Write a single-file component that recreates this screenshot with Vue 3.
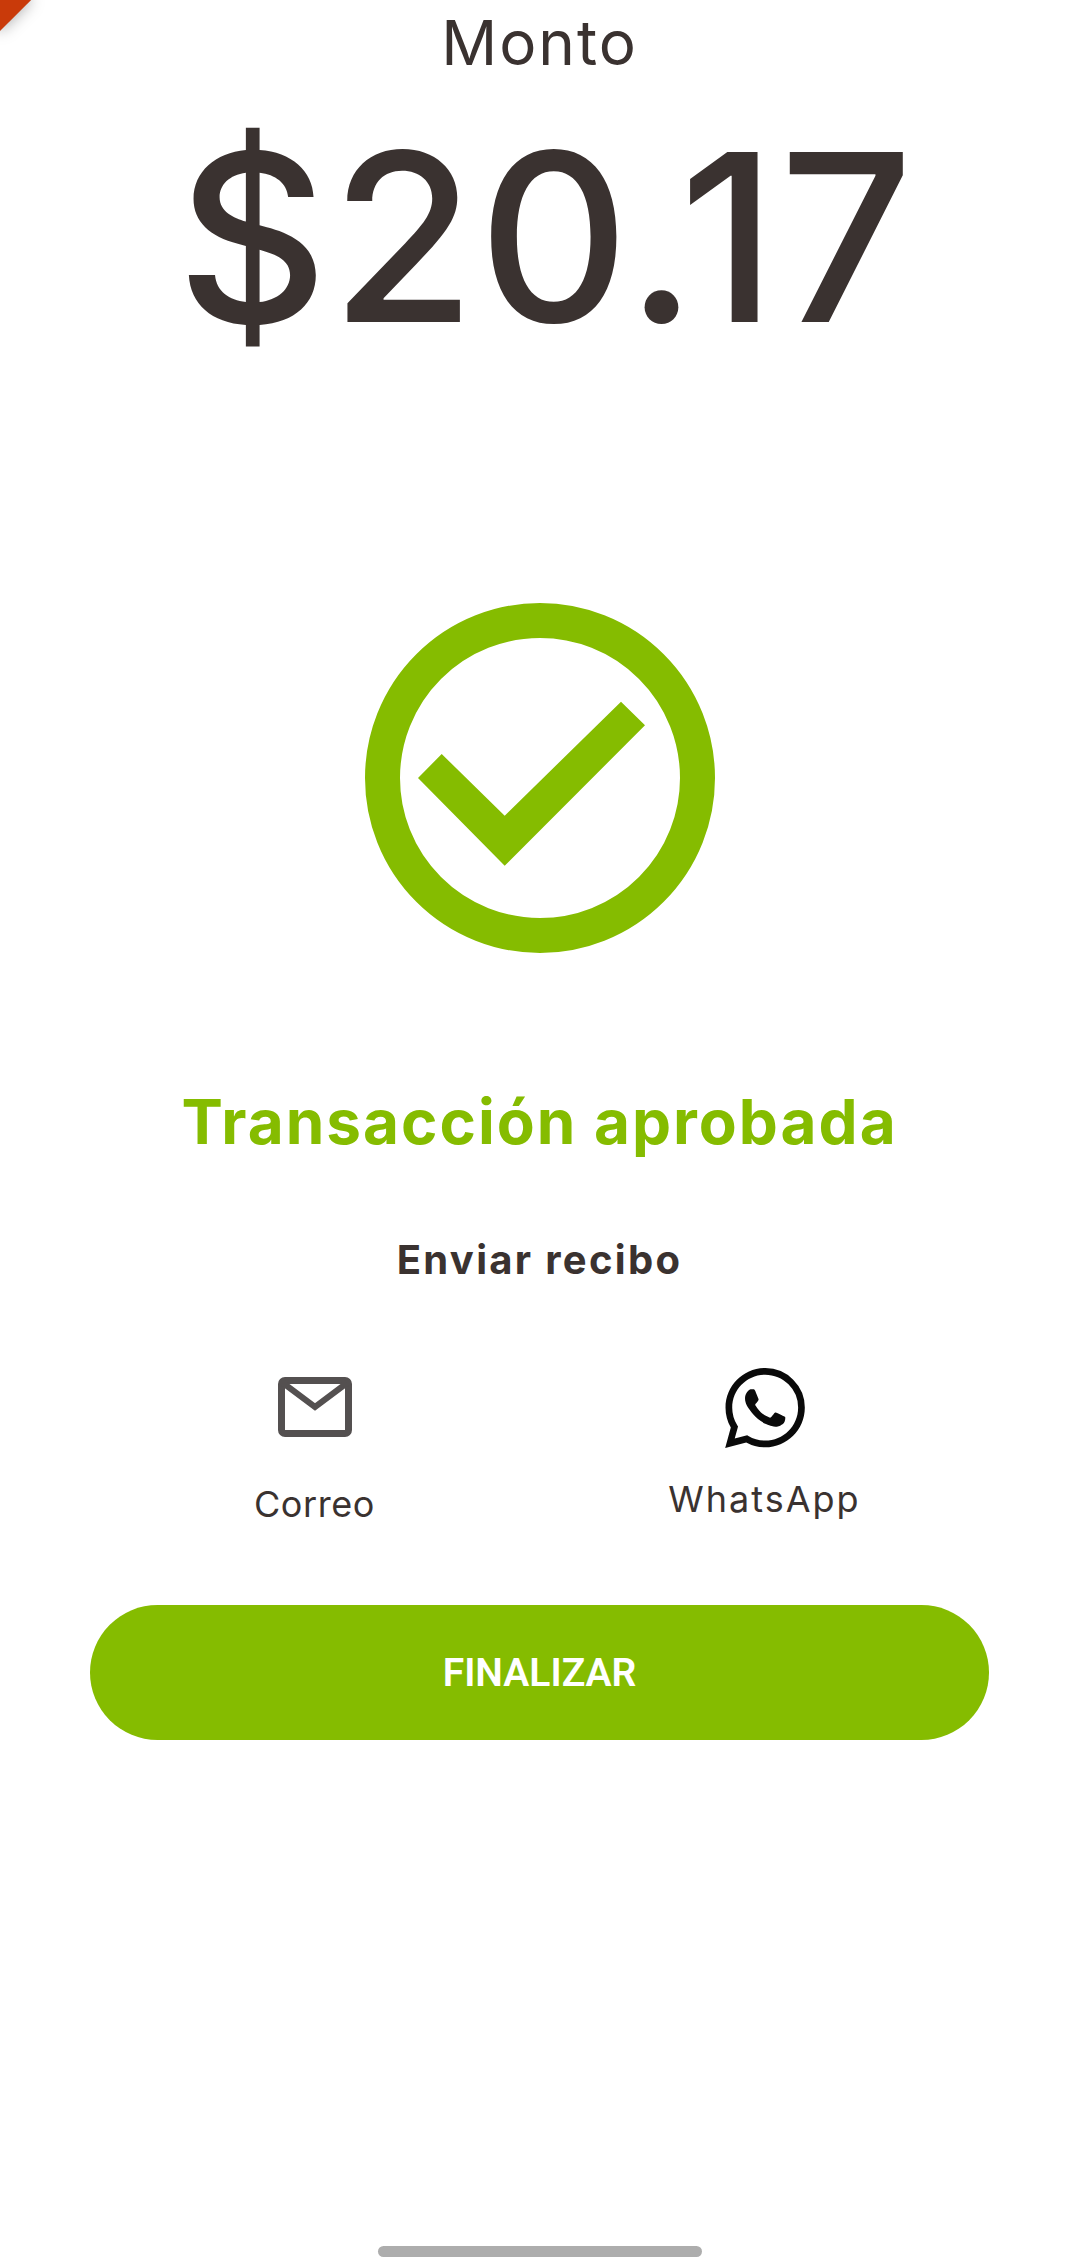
<template>
  <div class="screen">
    <div class="corner"></div>

    <div class="amount-label">Monto</div>
    <div class="amount">$20.17</div>

    <svg class="status-icon" viewBox="0 0 350 350" xmlns="http://www.w3.org/2000/svg">
      <circle cx="175" cy="175" r="157.5" fill="none" stroke="#85bc00" stroke-width="35" />
      <polygon points="53,175 76.7,151 139.7,212.7 256,98.7 280,122.3 139.7,262.7" fill="#85bc00" />
    </svg>

    <div class="status-text">Transacción aprobada</div>
    <div class="send-title">Enviar recibo</div>

    <div class="send-options">
      <div class="option">
        <svg class="mail-icon" viewBox="0 0 74 60" xmlns="http://www.w3.org/2000/svg">
          <rect x="3.5" y="3.5" width="67" height="53" rx="3.5" fill="none" stroke="#545050" stroke-width="7" />
          <polyline points="5,6 37,30 69,6" fill="none" stroke="#545050" stroke-width="6" />
        </svg>
        <span class="option-label">Correo</span>
      </div>
      <div class="option option-wa">
        <svg class="wa-icon" viewBox="0 0 24 24" xmlns="http://www.w3.org/2000/svg">
          <path fill="#0a0a0a" d="M17.472 14.382c-.297-.149-1.758-.867-2.03-.967-.273-.099-.471-.148-.67.15-.197.297-.767.966-.94 1.164-.173.199-.347.223-.644.075-.297-.15-1.255-.463-2.39-1.475-.883-.788-1.48-1.761-1.653-2.059-.173-.297-.018-.458.13-.606.134-.133.298-.347.446-.52.149-.174.198-.298.298-.497.099-.198.05-.371-.025-.52-.075-.149-.669-1.612-.916-2.207-.242-.579-.487-.5-.669-.51-.173-.008-.371-.01-.57-.01-.198 0-.52.074-.792.372-.272.297-1.04 1.016-1.04 2.479 0 1.462 1.065 2.875 1.213 3.074.149.198 2.096 3.2 5.077 4.487.709.306 1.262.489 1.694.625.712.227 1.36.195 1.871.118.571-.085 1.758-.719 2.006-1.413.248-.694.248-1.289.173-1.413-.074-.124-.272-.198-.57-.347m-5.421 7.403h-.004a9.87 9.87 0 01-5.031-1.378l-.361-.214-3.741.982.998-3.648-.235-.374a9.86 9.86 0 01-1.51-5.26c.001-5.45 4.436-9.884 9.888-9.884 2.64 0 5.122 1.03 6.988 2.898a9.825 9.825 0 012.893 6.994c-.003 5.45-4.437 9.884-9.885 9.884m8.413-18.297A11.815 11.815 0 0012.05 0C5.495 0 .16 5.335.157 11.892c0 2.096.547 4.142 1.588 5.945L.057 24l6.305-1.654a11.882 11.882 0 005.683 1.448h.005c6.554 0 11.89-5.335 11.893-11.893a11.821 11.821 0 00-3.48-8.413z" />
        </svg>
        <span class="option-label">WhatsApp</span>
      </div>
    </div>

    <button class="finish-btn">FINALIZAR</button>

    <div class="home-bar"></div>
  </div>
</template>

<script setup>
</script>

<style>
html, body {
  margin: 0;
  background: #ffffff;
}
</style>

<style scoped>
.screen {
  position: relative;
  width: 1079px;
  height: 2262px;
  overflow: hidden;
  background: #ffffff;
  display: flex;
  flex-direction: column;
  align-items: center;
  font-family: "Inter", "Liberation Sans", sans-serif;
  color: #3a3230;
}

.corner {
  position: absolute;
  top: -22px;
  left: -22px;
  width: 44px;
  height: 44px;
  background: #c93a0a;
  transform: rotate(45deg);
  box-shadow: 0 0 16px rgba(0, 0, 0, 0.35);
}

.amount-label {
  margin-top: 8px;
  height: 70px;
  line-height: 70px;
  font-size: 62px;
  letter-spacing: 2px;
}

.amount {
  margin-top: 14px;
  margin-left: 14px;
  height: 290px;
  line-height: 290px;
  font-size: 234px;
  font-weight: 500;
  letter-spacing: 3px;
}

.status-icon {
  display: block;
  width: 350px;
  height: 350px;
  margin-top: 221px;
}

.status-text {
  margin-top: 129px;
  height: 80px;
  line-height: 80px;
  font-size: 62px;
  font-weight: 700;
  letter-spacing: 2px;
  color: #85bc00;
}

.send-title {
  margin-top: 73px;
  height: 50px;
  line-height: 50px;
  font-size: 40px;
  font-weight: 700;
  letter-spacing: 2.3px;
}

.send-options {
  display: grid;
  grid-template-columns: 450px 450px;
  width: 900px;
  margin-top: 83px;
  height: 164px;
}

.option {
  display: flex;
  flex-direction: column;
  align-items: center;
}

.mail-icon {
  width: 74px;
  height: 60px;
  margin-top: 9px;
}

.wa-icon {
  width: 80px;
  height: 80px;
}

.option-label {
  margin-top: 45px;
  font-size: 36px;
  line-height: 44px;
  letter-spacing: 0.6px;
}

.option-wa .option-label {
  margin-top: 29px;
  letter-spacing: 2px;
}

.finish-btn {
  display: block;
  width: 899px;
  height: 135px;
  margin-top: 73px;
  border: none;
  border-radius: 68px;
  background: #85bc00;
  color: #ffffff;
  font-family: "Roboto", "Liberation Sans", sans-serif;
  font-size: 39px;
  font-weight: 600;
}

.home-bar {
  position: absolute;
  left: 378px;
  bottom: 5px;
  width: 324px;
  height: 11px;
  border-radius: 6px;
  background: #adadad;
}
</style>
